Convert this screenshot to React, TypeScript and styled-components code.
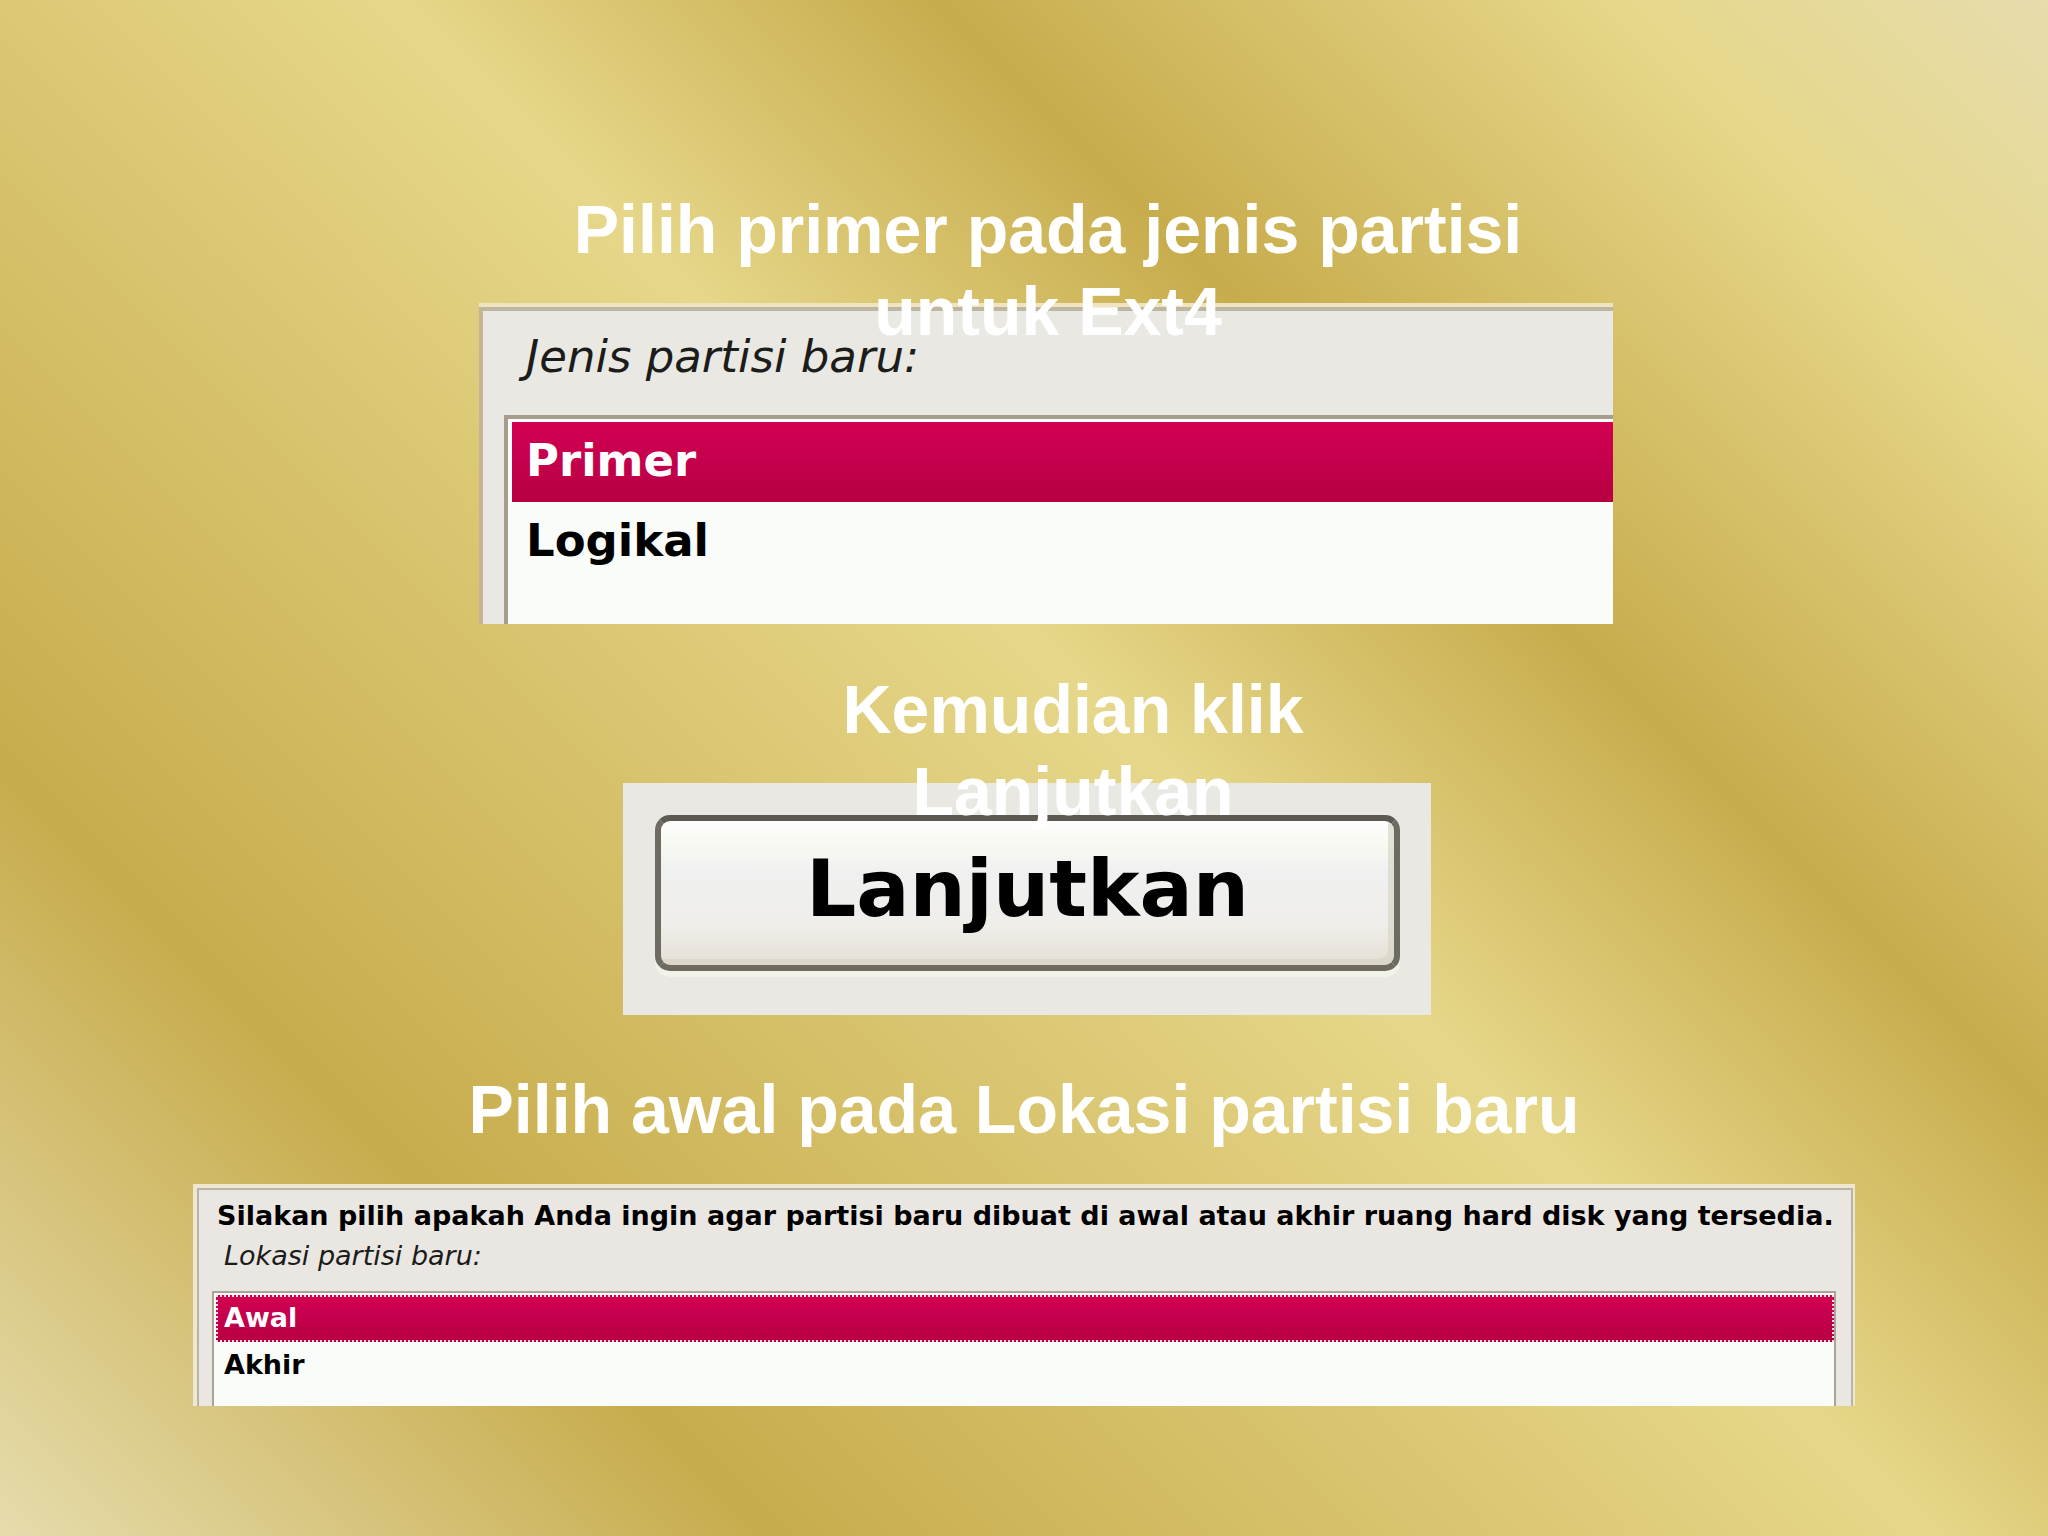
import React, { useId, useState } from "react";
import styled, { createGlobalStyle, css } from "styled-components";

const GlobalStyle = createGlobalStyle`
  *, *::before, *::after { box-sizing: border-box; }
  body { margin: 0; }
`;

const Slide = styled.main`
  min-height: 100vh;
  padding: 188px 24px 0;
  display: flex;
  flex-direction: column;
  align-items: center;
  background: linear-gradient(
    45deg,
    #e6dcac 0%,
    #c7ac4c 21.5%,
    #e6d78a 54%,
    #c7ac4c 69%,
    #e6d78a 88%,
    #e6dcac 100%
  );
`;

const Step = styled.section<{ $before?: number; $shift?: number }>`
  width: 100%;
  margin-top: ${(p) => p.$before ?? 0}px;
  padding-left: ${(p) => p.$shift ?? 0}px;
  display: flex;
  flex-direction: column;
  align-items: center;
`;

const Heading = styled.h2<{ $max: number; $indent?: number }>`
  margin: 0;
  box-sizing: content-box;
  max-width: ${(p) => p.$max}px;
  padding-left: ${(p) => p.$indent ?? 0}px;
  position: relative;
  z-index: 1;
  font: bold 68px/82px "Liberation Sans", Arial, sans-serif;
  text-align: center;
  color: #fff;
`;

const panelText = css`
  font-family: "DejaVu Sans", Verdana, sans-serif;
  color: #000;
`;

const LargePanel = styled.div`
  ${panelText}
  width: 100%;
  max-width: 1134px;
  margin-top: -49px;
  border-top: 4px solid #efe4bd;
  background: #e9e8e3;
`;

const LargePanelBody = styled.div`
  border-top: 4px solid #bdb6a2;
  border-left: 4px solid #c6b592;
  padding: 18px 0 0 21px;
`;

const WidePanel = styled.div`
  ${panelText}
  width: 100%;
  max-width: 1662px;
  margin-top: 34px;
  border: solid #efe8d0;
  border-width: 4px 2px 0 4px;
  background: #eae7e3;
`;

const WidePanelBody = styled.div`
  border: 2px solid #b9b4a6;
  border-bottom: 0;
  padding: 8px 15px 0 13px;
`;

const Question = styled.p`
  margin: 0 0 4px 5px;
  font-size: 27px;
  line-height: 36px;
  font-weight: bold;
  white-space: nowrap;
`;

const GroupLabel = styled.div<{ $large?: boolean }>`
  font-style: italic;
  color: #1c1c1a;
  ${(p) =>
    p.$large
      ? css`
          padding-left: 22px;
          margin-bottom: 30px;
          font-size: 45px;
          line-height: 56px;
        `
      : css`
          padding-left: 12px;
          margin-bottom: 17px;
          font-size: 27px;
          line-height: 36px;
        `}
`;

const List = styled.div<{ $large?: boolean }>`
  background: #fafcf9;
  ${(p) =>
    p.$large
      ? css`
          padding: 3px 0 42px 4px;
          border: solid #a69d8f;
          border-width: 4px 0 0 4px;
        `
      : css`
          padding: 2px 0 17px 2px;
          border: solid #aaa494;
          border-width: 2px 2px 0 2px;
        `}
`;

const Row = styled.label<{ $large?: boolean; $selected: boolean }>`
  display: flex;
  align-items: center;
  cursor: pointer;
  font-weight: bold;
  ${(p) =>
    p.$large
      ? css`
          padding: 11px 14px 13px;
          font-size: 45px;
          line-height: 56px;
        `
      : css`
          padding: 5px 8px 6px;
          font-size: 27px;
          line-height: 36px;
        `}
  ${(p) =>
    p.$selected &&
    css`
      color: #fff;
      background: linear-gradient(#d20050, #c4004c 50%, #b70041);
    `}
  ${(p) =>
    p.$selected &&
    !p.$large &&
    css`
      outline: 2px dotted #fbdce6;
      outline-offset: -2px;
    `}
`;

const Radio = styled.input`
  appearance: none;
  width: 0;
  height: 0;
  margin: 0;
  outline: none;
`;

const ButtonPanel = styled.div`
  width: 100%;
  max-width: 808px;
  margin-top: -49px;
  padding: 32px 31px 44px 32px;
  background: #e9e8e2;
`;

const ContinueButton = styled.button`
  ${panelText}
  display: block;
  width: 100%;
  padding: 22px 0 30px;
  border: 6px solid;
  border-color: #5c5a52 #6e6c62 #6e6a60 #6e6c62;
  border-radius: 15px;
  background: linear-gradient(#fdfdfb, #f8f8f2 18%, #f0f0f0 35%, #efeeea 72%, #e4dfd4);
  box-shadow: 0 6px 0 #f3f2e9, inset -6px -6px 0 rgba(214, 208, 194, 0.6);
  font-size: 79px;
  line-height: 92px;
  font-weight: bold;
  text-align: center;
  cursor: pointer;
`;

interface ChoicesProps {
  label: string;
  options: string[];
  large?: boolean;
}

function Choices({ label, options, large }: ChoicesProps) {
  const id = useId();
  const [value, setValue] = useState(options[0]);
  return (
    <>
      <GroupLabel id={id} $large={large}>
        {label}
      </GroupLabel>
      <List role="radiogroup" aria-labelledby={id} $large={large}>
        {options.map((option) => (
          <Row key={option} $large={large} $selected={option === value}>
            <Radio
              type="radio"
              name={id}
              checked={option === value}
              onChange={() => setValue(option)}
            />
            {option}
          </Row>
        ))}
      </List>
    </>
  );
}

export default function App() {
  return (
    <>
      <GlobalStyle />
      <Slide>
        <Step $shift={44}>
          <Heading $max={1040} $indent={4}>
            Pilih primer pada jenis partisi untuk Ext4
          </Heading>
          <LargePanel>
            <LargePanelBody>
              <Choices large label="Jenis partisi baru:" options={["Primer", "Logikal"]} />
            </LargePanelBody>
          </LargePanel>
        </Step>

        <Step $before={44} $shift={6}>
          <Heading $max={560} $indent={92}>
            Kemudian klik Lanjutkan
          </Heading>
          <ButtonPanel>
            <ContinueButton type="button">Lanjutkan</ContinueButton>
          </ButtonPanel>
        </Step>

        <Step $before={53}>
          <Heading $max={1400}>Pilih awal pada Lokasi partisi baru</Heading>
          <WidePanel>
            <WidePanelBody>
              <Question>
                Silakan pilih apakah Anda ingin agar partisi baru dibuat di awal atau akhir ruang
                hard disk yang tersedia.
              </Question>
              <Choices label="Lokasi partisi baru:" options={["Awal", "Akhir"]} />
            </WidePanelBody>
          </WidePanel>
        </Step>
      </Slide>
    </>
  );
}
